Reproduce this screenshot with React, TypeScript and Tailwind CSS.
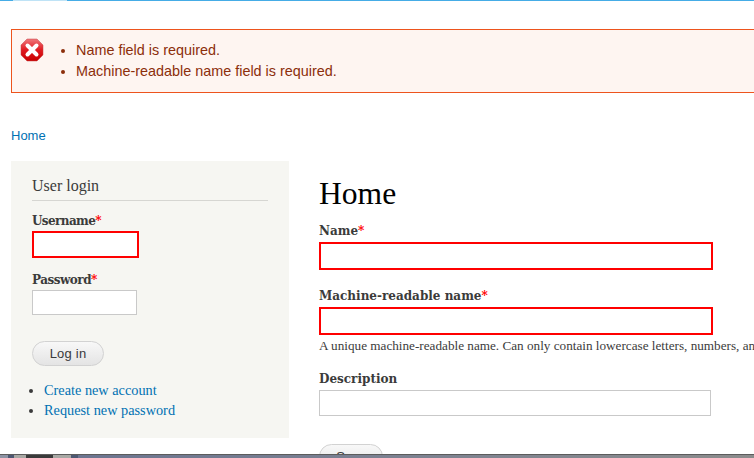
const serif = "font-['Liberation_Serif',serif]";

function Req() {
  return <span className="text-[#ff0000]">*</span>;
}

function ErrorIcon() {
  return (
    <svg width="24" height="24" viewBox="0 0 24 24">
      <defs>
        <linearGradient id="err" x1="0" y1="0" x2="0" y2="1">
          <stop offset="0" stopColor="#f0787c" />
          <stop offset="0.5" stopColor="#e01a20" />
          <stop offset="1" stopColor="#c80000" />
        </linearGradient>
      </defs>
      <polygon
        points="7,1 17,1 23,7 23,17 17,23 7,23 1,17 1,7"
        fill="url(#err)"
        stroke="#c4464a"
        strokeWidth="0.5"
        strokeLinejoin="round"
      />
      <path d="M7.5 7.5 L16.5 16.5 M16.5 7.5 L7.5 16.5" stroke="#fff" strokeWidth="4" strokeLinecap="round" />
    </svg>
  );
}

function Field({ label, required, error, input, gap, className }: { label: string; required?: boolean; error?: boolean; input: string; gap?: string; className?: string }) {
  return (
    <div className={className}>
      <div className={`font-['DejaVu_Serif',serif] text-[12px] leading-[20px] font-bold text-[#3b3b3b] ${gap ?? ""}`}>
        {label}
        {required && <Req />}
      </div>
      <input
        className={`${input} block bg-white ${error ? "border-2 border-[#ff0000]" : "border border-[#c9c9c9]"}`}
      />
    </div>
  );
}

function DesktopStrip() {
  return (
    <div className="absolute inset-x-0 bottom-0 flex h-[4px] border-t border-[#5c5c5c]">
      <div className="w-[8px] bg-[#8d93a4]" />
      <div className="w-[6px] bg-[#4d5872]" />
      <div className="w-[12px] bg-[#a8a8a4]" />
      <div className="w-[27px] bg-[#3a3a3a]" />
      <div className="w-[18px] bg-[#a8a8a4]" />
      <div className="w-[7px] bg-[#4d5872]" />
      <div className="flex-1 bg-gradient-to-r from-[#6c7590] via-[#7d8291] to-[#8c8c8c]" />
    </div>
  );
}

export default function App() {
  return (
    <div className="relative h-[458px] w-[754px] overflow-hidden bg-white">
      <div className="flex h-px">
        <div className="h-px w-[13px] bg-[#45ace6]" />
        <div className="h-px w-[54px] bg-[#bfe3f6]" />
        <div className="h-px flex-1 bg-[#45ace6]" />
      </div>

      <div className="ml-[11px] mt-[28px] flex h-[64px] w-[760px] border border-[#ed541d] bg-[#fef5f1] font-['Liberation_Sans',sans-serif] text-[14.4px] text-[#8c2e0b]">
        <div className="ml-[8px] mt-[8px]">
          <ErrorIcon />
        </div>
        <ul className="ml-[32px] mt-[10px] list-disc pl-0 leading-[21px]">
          <li>Name field is required.</li>
          <li>Machine-readable name field is required.</li>
        </ul>
      </div>

      <div className="ml-[11px] mt-[35px] font-['Liberation_Sans',sans-serif] text-[13px] leading-[16px] text-[#0071b3]">Home</div>

      <div className={`mt-[17px] flex ${serif}`}>
        <aside className="ml-[11px] h-[277px] w-[278px] shrink-0 bg-[#f6f6f2] pl-[21px] pr-[21px] pt-[15px]">
          <h2 className="border-b border-[#d6d6d2] pb-[4px] text-[16px] leading-[20px] text-[#3b3b3b]">User login</h2>
          <Field label="Username" required error input="w-[107px] h-[27px]" gap="tracking-[-0.6px]" className="mt-[10px]" />
          <Field label="Password" required input="w-[105px] h-[25px]" gap="tracking-[-0.5px]" className="mt-[12px]" />
          <button className="mt-[26px] block h-[25px] w-[72px] rounded-[13px] border border-[#d2d2d2] bg-gradient-to-b from-[#f8f8f8] to-[#e4e4e4] font-['Liberation_Sans',sans-serif] text-[13px] tracking-[0.2px] text-[#3a3a3a]">
            Log in
          </button>
          <ul className="mt-[14px] list-disc pl-[12px] text-[14.3px] leading-[20px] text-[#3b3b3b]">
            <li className="text-[#0071b3] marker:text-[#3b3b3b]">Create new account</li>
            <li className="text-[#0071b3] marker:text-[#3b3b3b]">Request new password</li>
          </ul>
        </aside>

        <main className="ml-[30px] min-w-0 flex-1 pt-[15px]">
          <h1 className="text-[31.6px] leading-[36px] text-black">Home</h1>
          <Field label="Name" required error input="w-[394px] h-[28px]" gap="pt-[1px] mb-[1px]" className="mt-[8px]" />
          <Field label="Machine-readable name" required error input="w-[394px] h-[28px]" gap="pt-[1px] mb-[1px]" className="mt-[15px]" />
          <p className="mt-[3px] whitespace-nowrap text-[13.2px] leading-[16px] text-[#3b3b3b]">
            A unique machine-readable name. Can only contain lowercase letters, numbers, and underscores.
          </p>
          <Field label="Description" input="w-[392px] h-[26px]" gap="pt-[1px] mb-[1px]" className="mt-[14px]" />
          <button className="mt-[28px] block h-[25px] w-[64px] rounded-[13px] border border-[#d2d2d2] bg-gradient-to-b from-[#f8f8f8] to-[#e4e4e4] font-['Liberation_Sans',sans-serif] text-[13px] text-[#3a3a3a]">
            Save
          </button>
        </main>
      </div>

      <DesktopStrip />
    </div>
  );
}
